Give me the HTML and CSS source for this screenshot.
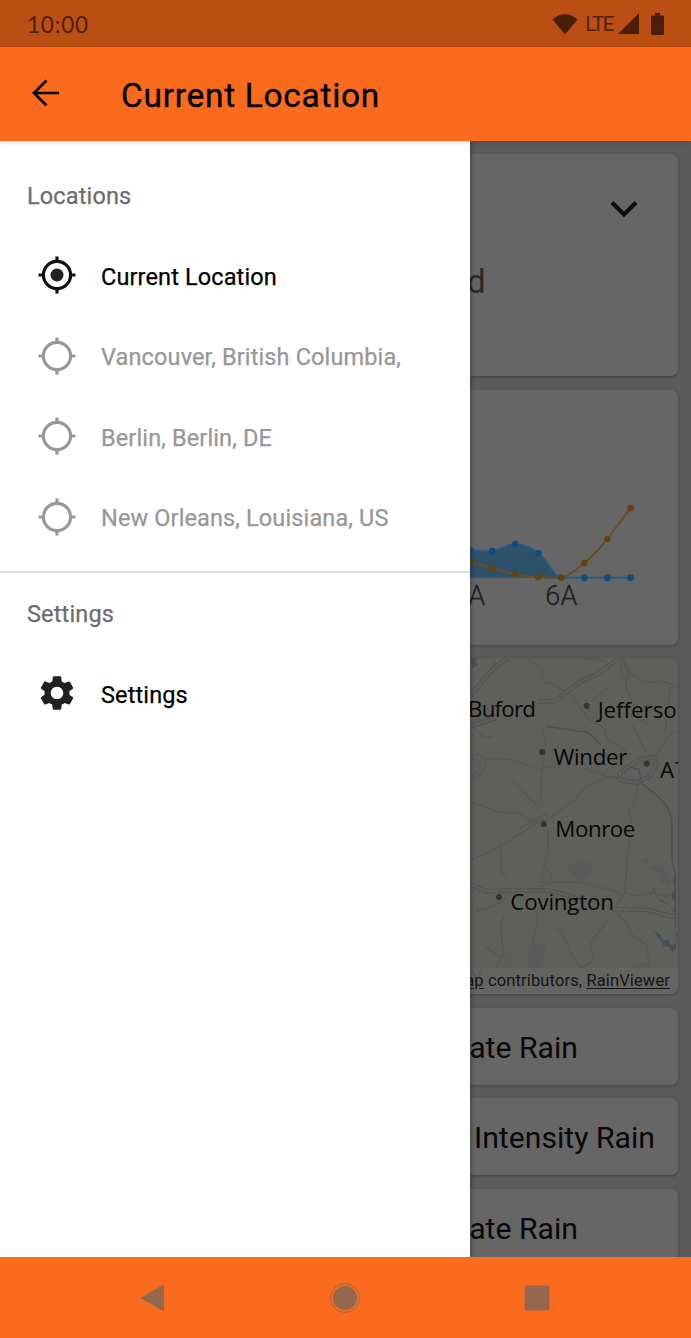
FILE: index.html
```html
<!DOCTYPE html>
<html lang="en">
<head>
<meta charset="utf-8">
<title>Current Location</title>
<link rel="stylesheet" href="styles.css">
</head>
<body>
<div class="phone">
  <div class="status-bar">
    <span class="clock">10:00</span>
    <div class="status-icons">
      <svg class="wifi" width="26" height="22" viewBox="0 0 26 22"><path d="M.5 6.500C8-.6 18-.6 25.500 6.500L13 21.500Z"/></svg>
      <span class="network">LTE</span>
      <svg class="signal" width="21" height="21" viewBox="0 0 21 21"><path d="M21 0V21H0Z"/></svg>
      <svg class="battery" width="13" height="22" viewBox="0 0 13 22"><path d="M4 0h5v2.500h2.500q1.500 0 1.500 1.500v16.500q0 1.500-1.500 1.500h-10Q0 22 0 20.500V4Q0 2.500 1.500 2.500H4Z"/></svg>
    </div>
  </div>
  <header class="app-bar">
    <svg class="back" width="28" height="28" viewBox="0 0 28 28"><path d="M27 14H2.500M14.500 1.500L2 14l12.500 12.500"/></svg>
    <h1 class="title">Current Location</h1>
  </header>
  <div class="body">
    <nav class="drawer">
      <h2 class="section-title">Locations</h2>
      <div class="item active">
        <svg class="icon" width="38" height="38" viewBox="0 0 38 38"><circle class="ring" cx="19" cy="19" r="13.600"/><path class="ring" d="M19 .5v5.500M19 32v5.500M.5 19H6M32 19h5.500"/><circle class="dot" cx="19" cy="19" r="6.500"/></svg>
        <span>Current Location</span>
      </div>
      <div class="item">
        <svg class="icon" width="38" height="38" viewBox="0 0 38 38"><circle class="ring" cx="19" cy="19" r="13.600"/><path class="ring" d="M19 .5v5.500M19 32v5.500M.5 19H6M32 19h5.500"/></svg>
        <span>Vancouver, British Columbia,</span>
      </div>
      <div class="item">
        <svg class="icon" width="38" height="38" viewBox="0 0 38 38"><circle class="ring" cx="19" cy="19" r="13.600"/><path class="ring" d="M19 .5v5.500M19 32v5.500M.5 19H6M32 19h5.500"/></svg>
        <span>Berlin, Berlin, DE</span>
      </div>
      <div class="item">
        <svg class="icon" width="38" height="38" viewBox="0 0 38 38"><circle class="ring" cx="19" cy="19" r="13.600"/><path class="ring" d="M19 .5v5.500M19 32v5.500M.5 19H6M32 19h5.500"/></svg>
        <span>New Orleans, Louisiana, US</span>
      </div>
      <div class="divider"></div>
      <h2 class="section-title second">Settings</h2>
      <div class="item active settings">
        <svg class="icon" width="38" height="38" viewBox="1.050 1.050 21.900 21.900"><path class="dot" d="M19.140 12.940c.04-.3.060-.61.060-.94 0-.32-.02-.64-.07-.94l2.030-1.580c.18-.14.230-.41.120-.61l-1.920-3.320c-.12-.22-.37-.29-.59-.22l-2.390.960c-.5-.38-1.030-.7-1.620-.94l-.36-2.540c-.04-.24-.24-.41-.48-.41h-3.840c-.24 0-.43.170-.47.410l-.36 2.540c-.59.240-1.130.570-1.620.940l-2.390-.96c-.22-.08-.47 0-.59.220L2.740 8.870c-.12.210-.08.470.120.610l2.030 1.580c-.05.300-.09.630-.09.940s.020.640.070.940l-2.030 1.580c-.18.140-.23.410-.12.610l1.920 3.320c.12.220.370.290.590.220l2.390-.96c.5.380 1.030.700 1.620.940l.36 2.540c.05.240.240.410.480.410h3.840c.24 0 .44-.17.470-.41l.36-2.540c.59-.24 1.130-.56 1.620-.94l2.390.960c.22.080.470 0 .59-.22l1.920-3.320c.12-.22.070-.47-.12-.61l-2.010-1.580zM12 15.600c-1.980 0-3.600-1.620-3.600-3.600s1.620-3.600 3.600-3.600 3.600 1.620 3.600 3.600-1.620 3.600-3.600 3.600z"/></svg>
        <span>Settings</span>
      </div>
    </nav>
    <main class="content">
      <section class="card summary">
        <svg class="chevron" width="28" height="18" viewBox="0 0 28 18"><path d="M2 2.500L14 14.500 26 2.500"/></svg>
        <span class="condition">d</span>
      </section>
      <section class="card chart">
        <svg width="208" height="255" viewBox="30 -270 624 765">
          <path class="area" d="M30 211C65 210 75 216 97 213C125 210 138 192 166 192C195 192 216 206 235 219C263 240 280 293 304 293H30Z"/>
          <path class="rain-line" d="M30 211C65 210 75 216 97 213C125 210 138 192 166 192C195 192 216 206 235 219C263 240 280 293 304 293H512"/>
          <g class="rain-dot"><circle cx="31" cy="212" r="10"/><circle cx="97" cy="213" r="10"/><circle cx="166" cy="192" r="10"/><circle cx="235" cy="219" r="10"/><circle cx="373" cy="293" r="10"/><circle cx="442" cy="293" r="10"/><circle cx="512" cy="293" r="10"/></g>
          <path class="temp-line" d="M30 246L97 265Q135 276 166 282Q200 289 235 291Q270 295 304 293C330 289 350 267 373 249Q410 218 442 177L512 84"/>
          <g class="temp-dot"><circle cx="30" cy="246" r="10"/><circle cx="97" cy="265" r="10"/><circle cx="166" cy="282" r="10"/><circle cx="235" cy="291" r="10"/><circle cx="304" cy="293" r="10"/><circle cx="373" cy="249" r="10"/><circle cx="442" cy="177" r="10"/><circle class="hot" cx="512" cy="84" r="10"/></g>
          <text class="axis" x="25" y="374">A</text>
          <text class="axis" x="256" y="374" textLength="96">6A</text>
        </svg>
      </section>
      <section class="card map">
        <svg width="208" height="336" viewBox="30 24 624 1008">
          <g class="land">
            <path d="M320 658l35-34 43 20-7 34-25 18zM538 632l28-12-5 28 38-4 25 25 6 35-31-8-12-31zM219 873l37 12-8 58-24 25-18-21z"/>
            <path d="M514 950l50-14 5 12-52 8z"/>
          </g>
          <g class="road">
            <path d="M202 24l42 35 5 35 30 8 30 20 22 8 55 78 45 25 10 34 45 28 26 22M360 24l74 8M486 24l14 40 54 32 58-2 42 18M500 76l-3 34 42 96 25 20M398 150l52-42M632 112l-10 60-6 75M654 243l-32 18-25 42-18 22M516 226l18 28 22 52M33 140l66-94 8-20M33 210l75-6M42 236l30 26 26-1M76 326l80 2 80 32 64-16M155 390l25 24 50 52M247 230l10 60-12 80-4 96M33 455l86 32 56 1 34 22h58M271 504l75-56 36-42 65-25 37 3M370 355l75 25 45 12M445 357l-15 25M538 392l-14 65-21 30 14 35M180 535l85-48M209 514l62-4"/>
            <path d="M33 320l20-8 24 20-10 38-34 16M33 330l14-4 16 10-8 28-22 12M482 24v40l14 26 12-6V64l-18-40"/>
            <path d="M33 628l60-24 43-24 108-70M124 580v86l18 22M264 534v68l-22 94h24l10-18-18-22M237 710l53-14h64l108 26 34 22M510 574l-8 46-8 105-26 48 18 3 12-12M496 728l28 10 54-9 40 10 30-10M50 784l55-18 32-20V726M132 798l-10 30 8 84-24 48M72 886l52 40M224 772l10 45-28 96 4 34M285 834l20 12 30 68 28 42 38-26-10-50 58-78M472 792l28 28 16 34 42 30 10 60"/>
          </g>
          <g class="highway">
            <path d="M33 130C70 102 85 55 145 24M234 155l50-2 80-60 52-22 60-47M33 228l74-24M33 704l45 20 60-3h132l76 22M444 777l122 3 60 18h28"/>
            <path d="M583 321l-48 10-56 38 4 22 45 7 43-20 18-34z"/>
          </g>
          <g class="highway-core">
            <path d="M33 130C70 102 85 55 145 24M234 155l50-2 80-60 52-22 60-47M33 228l74-24M33 704l45 20 60-3h132l76 22M444 777l122 3 60 18h28"/>
            <path d="M583 321l-48 10-56 38 4 22 45 7 43-20 18-34z"/>
          </g>
          <path class="river" d="M258 229l124 18 18 14 22 25M508 350l28 8 10 45 42 30 34 38 14 36v120l5 26 7 35"/>
          <path class="water" d="M33 24h18l-5 14 10 6-20 10zM648 660l-9 30 4 26-8 22 10 22-4 19-30-27-17-8-12-30-8-4 30 46 22 7 21 31-5 32 10 22-2 32-14 8-12-20-12 4-14-20-16-9 20 28 9 18 16 2 12 15 9-13z"/>
          <path class="road" d="M143 906l-3 15 9 8-6 20"/>
          <g class="place-dot"><circle cx="380" cy="167" r="9"/><circle cx="246" cy="306" r="9"/><circle cx="560" cy="341" r="9"/><circle cx="251" cy="523" r="9"/><circle cx="117" cy="741" r="9"/></g>
          <g class="place">
            <text x="24" y="201" textLength="204">Buford</text>
            <text x="413" y="204" textLength="278">Jefferson</text>
            <text x="281" y="344" textLength="221">Winder</text>
            <text x="600" y="384">A</text><text x="645" y="384">T</text>
            <text x="286" y="561" textLength="240">Monroe</text>
            <text x="151" y="779" textLength="311">Covington</text>
            <text class="faded" x="31" y="1004">Y</text>
          </g>
        </svg>
        <div class="attribution"><span class="link">ap</span> contributors, <span class="link">RainViewer</span></div>
      </section>
      <section class="card alert">ate Rain</section>
      <section class="card alert wide">Intensity Rain</section>
      <section class="card alert">ate Rain</section>
    </main>
  </div>
  <footer class="nav-bar">
    <svg width="24" height="28" viewBox="0 0 24 28"><path d="M23 2v24L2 14Z" stroke-width="2" stroke-linejoin="round"/></svg>
    <svg class="home" width="32" height="32" viewBox="0 0 32 32"><circle cx="16" cy="16" r="12" stroke="none"/><circle cx="16" cy="16" r="14.400" fill="none"/></svg>
    <svg width="26" height="26" viewBox="0 0 26 26"><rect x=".5" y=".5" width="25" height="25" rx="2" stroke="none"/></svg>
  </footer>
</div>
</body>
</html>
```
FILE: styles.css
```css
* { box-sizing: border-box; }
body { margin: 0; font-family: Roboto, sans-serif; }
.phone { width: 691px; height: 1338px; display: flex; flex-direction: column; overflow: hidden; background: #fff; }

.status-bar { height: 47px; flex: none; display: flex; align-items: center; justify-content: space-between; padding: 0 27px; background: #bb4f13; color: #4a1f08; }
.clock { font: 22.500px/30px Lato, sans-serif; letter-spacing: 0.800px; padding-top: 3px; }
.status-icons { display: flex; align-items: center; fill: #4a1f08; }
.network { font-size: 20.500px; line-height: 24px; font-weight: 400; letter-spacing: -1.500px; margin: 0 5px 0 7px; }
.battery { margin-left: 12px; }

.app-bar { height: 94px; flex: none; display: flex; align-items: center; padding: 0 32px; background: #fb6b1d; position: relative; z-index: 1; box-shadow: 0 1px 5px rgba(0, 0, 0, .2); }
.back { fill: none; stroke: #000; stroke-width: 2.700; margin-top: -2px; }
.title { margin: 3px 0 0 61px; font-size: 33.500px; line-height: 40px; font-weight: 400; letter-spacing: .7px; color: #000; -webkit-text-stroke: .35px #000; }

.body { flex: 1; min-height: 0; display: grid; grid-template-columns: 470px 1fr; }
.drawer { background: #fff; padding-top: 39px; position: relative; box-shadow: 0 0 5px rgba(0, 0, 0, .5); }
.section-title { margin: 0 0 0 27px; font-size: 23.500px; line-height: 32px; font-weight: 400; letter-spacing: .15px; color: #6c6c6c; -webkit-text-stroke: .25px currentColor; }
.item { height: 80.500px; display: flex; align-items: center; gap: 25px; padding-left: 38px; font-size: 23.500px; font-weight: 400; letter-spacing: .13px; color: #979797; -webkit-text-stroke: .25px currentColor; }
.section-title + .item { margin-top: 23px; }
.item.active { color: #000; }
.icon { flex: none; fill: none; stroke: none; }
.item span { padding-top: 3px; }
.ring { stroke: #999; stroke-width: 3.200; }
.active .ring { stroke: #111; }
.dot { fill: #212121; }
.divider { height: 2px; margin-top: 14px; background: #dedede; }
.second { margin-top: 25px; }

.content { overflow: hidden; background: #5b5b5b; display: flex; flex-direction: column; gap: 13.500px; padding: 13px 13px 0 0; }
.card { flex: none; background: #666; border-radius: 0 7px 7px 0; box-shadow: 0 1px 3px rgba(0, 0, 0, .3); overflow: hidden; }
.card svg { display: block; }
.summary { height: 222px; padding-top: 46px; }
.card .chevron { margin-left: 140px; fill: none; stroke: #0b0b0b; stroke-width: 4; }
.condition { display: block; margin: 42px 0 0 -3px; font-size: 33px; line-height: 44px; color: #2b2b2b; }
.chart { height: 255px; }
.area { fill: #2d506b; }
.rain-line, .temp-line { fill: none; stroke-width: 6; }
.rain-line { stroke: #265b88; }
.temp-line { stroke: #67501d; }
.rain-dot { fill: #124c7b; }
.temp-dot { fill: #624411; }
.hot { fill: #713910; }
.axis { font: 300 81px Roboto, sans-serif; fill: #222; stroke: #222; stroke-width: 1; }

.map { height: 336px; background: #5f5f5c; display: grid; grid-template-columns: 208px; }
.map > * { grid-area: 1 / 1; }
.land { fill: #5a5b5a; }
.road, .highway { fill: none; stroke: #575857; stroke-width: 4; stroke-linejoin: round; }
.highway { stroke: #525455; stroke-width: 14; }
.highway-core { fill: none; stroke: #5f5f5e; stroke-width: 7; stroke-linejoin: round; }
.river { fill: none; stroke: #47525a; stroke-width: 4; }
.water { fill: #485057; }
.place-dot { fill: #343434; }
.place { font: 67px "Open Sans", sans-serif; fill: #080808; stroke: #5f5f5c; stroke-width: 5; paint-order: stroke; }
.faded { fill: #3b3b3b; }
.attribution { align-self: end; height: 26px; background: rgba(102, 102, 102, .75); padding-right: 8px; display: flex; justify-content: flex-end; white-space: pre; font-size: 16.500px; line-height: 25px; letter-spacing: .13px; color: #151515; }
.link { text-decoration: underline; text-underline-offset: 2px; }

.alert { height: 77px; padding-right: 100px; display: flex; align-items: center; justify-content: flex-end; font-size: 30.200px; white-space: nowrap; color: #080808; padding-top: 2px; }
.wide { padding-right: 23px; }

.nav-bar { height: 81px; flex: none; display: flex; align-items: center; justify-content: space-between; padding: 0 141px 0 140px; background: #fb6b1d; fill: #94684e; stroke: #94684e; position: relative; }
.home { margin-left: 2px; }
```
